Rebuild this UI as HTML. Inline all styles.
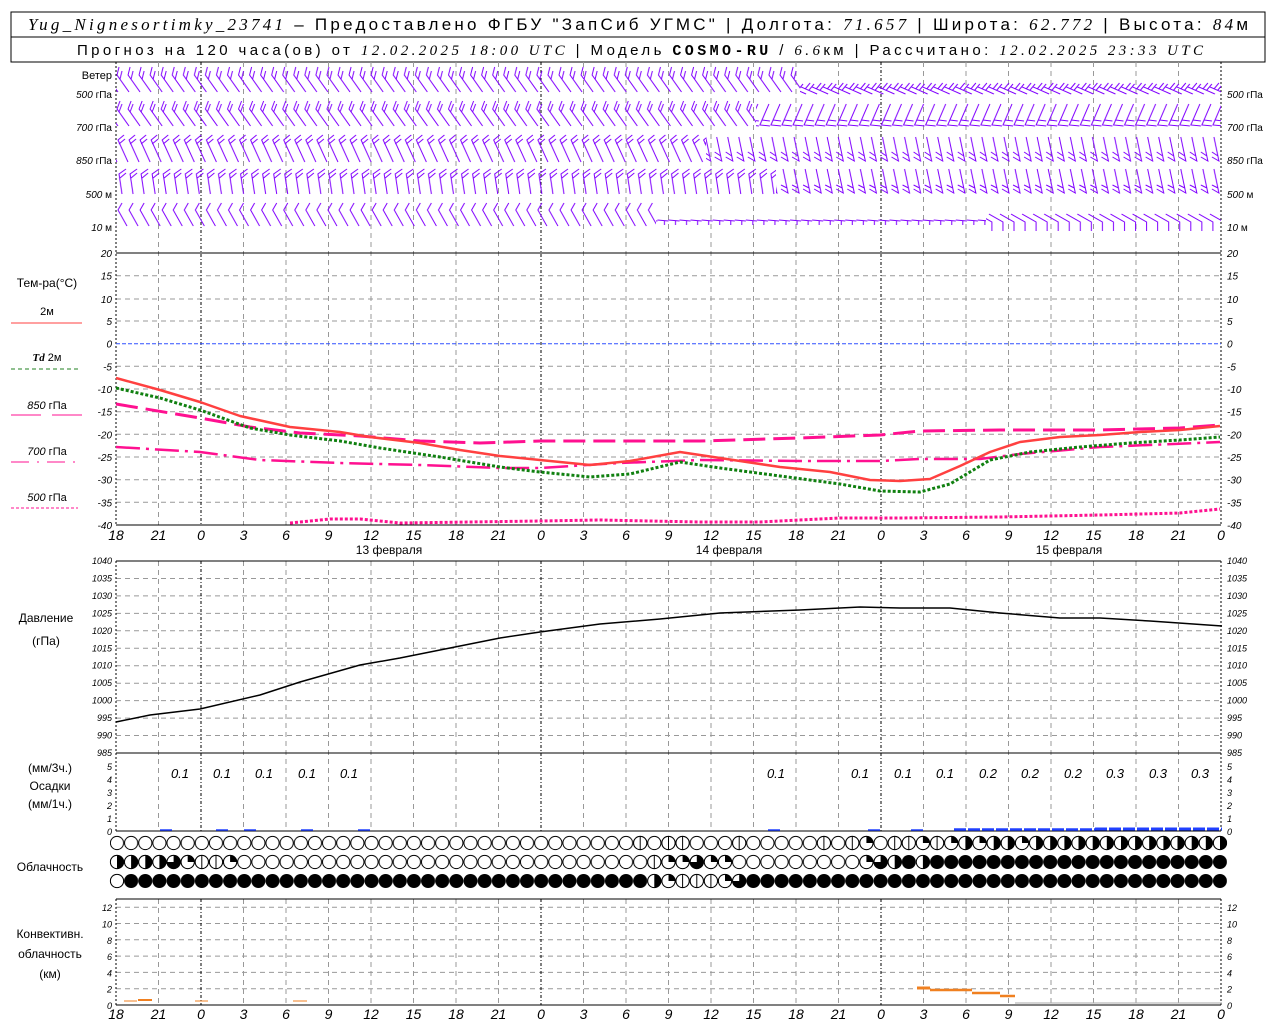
<!DOCTYPE html>
<html><head><meta charset="utf-8"><style>
html,body{margin:0;padding:0;background:#fff;width:1280px;height:1024px;overflow:hidden}
svg{display:block}
text{font-family:"Liberation Sans",sans-serif}
</style></head><body>
<svg width="1280" height="1024" xmlns="http://www.w3.org/2000/svg" xmlns:xlink="http://www.w3.org/1999/xlink">
<defs>
<pattern id="w1a" patternUnits="userSpaceOnUse" x="116" y="66" width="11.05" height="30"><g stroke="#8000ff" stroke-width="1" fill="none"><g id="b1"><path d="M13,26 L1,9 L3,1 M4,13 L6,5"/></g><use xlink:href="#b1" x="-11.05"/><use xlink:href="#b1" x="11.05"/></g></pattern>
<pattern id="w1b" patternUnits="userSpaceOnUse" x="116" y="66" width="11.05" height="30"><g stroke="#8000ff" stroke-width="1" fill="none"><g id="b2"><path d="M0,21 L16,28 M4,23 L9,17 M8,24 L13,18"/></g><use xlink:href="#b2" x="-11.05"/><use xlink:href="#b2" x="11.05"/></g></pattern>
<pattern id="w2a" patternUnits="userSpaceOnUse" x="116" y="99" width="11.05" height="30"><g stroke="#8000ff" stroke-width="1" fill="none"><g id="b3"><path d="M13,27 L1,10 L4,2 M3,13 L6,5"/></g><use xlink:href="#b3" x="-11.05"/><use xlink:href="#b3" x="11.05"/></g></pattern>
<pattern id="w2b" patternUnits="userSpaceOnUse" x="116" y="99" width="11.05" height="30"><g stroke="#8000ff" stroke-width="1" fill="none"><g id="b4"><path d="M12,5 L3,26 L13,27 M5,21 L13,22"/></g><use xlink:href="#b4" x="-11.05"/><use xlink:href="#b4" x="11.05"/></g></pattern>
<pattern id="w3a" patternUnits="userSpaceOnUse" x="116" y="134" width="11.05" height="32"><g stroke="#8000ff" stroke-width="1" fill="none"><g id="b5"><path d="M12,28 L2,6 L8,1 M3,10 L9,5"/></g><use xlink:href="#b5" x="-11.05"/><use xlink:href="#b5" x="11.05"/></g></pattern>
<pattern id="w3b" patternUnits="userSpaceOnUse" x="116" y="134" width="11.05" height="32"><g stroke="#8000ff" stroke-width="1" fill="none"><g id="b6"><path d="M4,3 L9,27 L2,23 M8,22 L2,18"/></g><use xlink:href="#b6" x="-11.05"/><use xlink:href="#b6" x="11.05"/></g></pattern>
<pattern id="w4a" patternUnits="userSpaceOnUse" x="116" y="166" width="11.05" height="32"><g stroke="#8000ff" stroke-width="1" fill="none"><g id="b7"><path d="M6,28 L3,8 L10,3 M4,12 L10,7"/></g><use xlink:href="#b7" x="-11.05"/><use xlink:href="#b7" x="11.05"/></g></pattern>
<pattern id="w4b" patternUnits="userSpaceOnUse" x="116" y="166" width="11.05" height="32"><g stroke="#8000ff" stroke-width="1" fill="none"><g id="b8"><path d="M4,3 L9,27 L2,23 M8,22 L2,19"/></g><use xlink:href="#b8" x="-11.05"/><use xlink:href="#b8" x="11.05"/></g></pattern>
<pattern id="w5a" patternUnits="userSpaceOnUse" x="116" y="200" width="11.05" height="32"><g stroke="#8000ff" stroke-width="1" fill="none"><g id="b9"><path d="M11,26 L2,10 L6,3"/></g><use xlink:href="#b9" x="-11.05"/><use xlink:href="#b9" x="11.05"/></g></pattern>
<pattern id="w5b" patternUnits="userSpaceOnUse" x="116" y="200" width="11.05" height="32"><g stroke="#8000ff" stroke-width="1" fill="none"><g id="b10"><path d="M0,20 L11.05,21 M7,21 L7,25"/></g></g></pattern>
<pattern id="w5c" patternUnits="userSpaceOnUse" x="116" y="200" width="11.05" height="32"><g stroke="#8000ff" stroke-width="1" fill="none"><g id="b11"><path d="M0,14 L14,22 L14,31"/></g><use xlink:href="#b11" x="-11.05"/><use xlink:href="#b11" x="11.05"/></g></pattern>
<pattern id="cO" patternUnits="userSpaceOnUse" x="110" y="833" width="14.14" height="19"><circle cx="7" cy="10" r="6.6" fill="#fff" stroke="#000"/></pattern>
<pattern id="cF" patternUnits="userSpaceOnUse" x="110" y="833" width="14.14" height="19"><circle cx="7" cy="10" r="7" fill="#000"/></pattern>
<g id="co"><circle r="6.6" fill="#fff" stroke="#000"/></g>
<g id="ch"><circle r="6.6" fill="#fff" stroke="#000"/><path d="M0,-6.8 A6.8,6.8 0 0 1 0,6.8Z" fill="#000"/></g>
<g id="cq"><circle r="6.6" fill="#fff" stroke="#000"/><path d="M0,0 L0,-6.8 A6.8,6.8 0 0 1 6.8,0Z" fill="#000"/></g>
<g id="ct"><circle r="6.6" fill="#fff" stroke="#000"/><path d="M0,0 L0,-6.8 A6.8,6.8 0 1 1 -6.8,0Z" fill="#000"/></g>
<g id="cv"><circle r="6.6" fill="#fff" stroke="#000"/><path d="M0,-6.8V6.8" stroke="#000"/></g>
</defs>

<rect x="11" y="12" width="1254" height="50" fill="#fff" stroke="#000" stroke-width="1"/>
<line x1="11" y1="37" x2="1265" y2="37" stroke="#000"/>
<text x="638" y="30" font-size="17" text-anchor="middle" fill="#000" textLength="1220"><tspan font-family="Liberation Serif" font-style="italic">Yug_Nignesortimky_23741</tspan> – Предоставлено ФГБУ "ЗапСиб УГМС" | Долгота: <tspan font-family="Liberation Serif" font-style="italic">71.657</tspan> | Широта: <tspan font-family="Liberation Serif" font-style="italic">62.772</tspan> | Высота: <tspan font-family="Liberation Serif" font-style="italic">84</tspan>м</text>
<text x="640" y="55" font-size="15" text-anchor="middle" fill="#000" textLength="1126">Прогноз на 120 часа(ов) от <tspan font-family="Liberation Serif" font-style="italic">12.02.2025 18:00 UTC</tspan>  | Модель <tspan font-family="Liberation Mono" font-weight="bold">COSMO-RU</tspan> / <tspan font-family="Liberation Serif" font-style="italic">6.6</tspan>км | Рассчитано: <tspan font-family="Liberation Serif" font-style="italic">12.02.2025 23:33 UTC</tspan></text>

<!-- vertical grid -->
<g stroke="#999" stroke-dasharray="5,4" fill="none">
<path d="M158.5,62V525M243.5,62V525M286,62V525M328.5,62V525M371,62V525M413.5,62V525M456,62V525M498.5,62V525M583.5,62V525M626,62V525M668.5,62V525M711,62V525M753.5,62V525M796,62V525M838.5,62V525M923.5,62V525M966,62V525M1008.5,62V525M1051,62V525M1093.5,62V525M1136,62V525M1178.5,62V525"/>
<path d="M158.5,561V831M243.5,561V831M286,561V831M328.5,561V831M371,561V831M413.5,561V831M456,561V831M498.5,561V831M583.5,561V831M626,561V831M668.5,561V831M711,561V831M753.5,561V831M796,561V831M838.5,561V831M923.5,561V831M966,561V831M1008.5,561V831M1051,561V831M1093.5,561V831M1136,561V831M1178.5,561V831"/>
<path d="M158.5,899V1005M243.5,899V1005M286,899V1005M328.5,899V1005M371,899V1005M413.5,899V1005M456,899V1005M498.5,899V1005M583.5,899V1005M626,899V1005M668.5,899V1005M711,899V1005M753.5,899V1005M796,899V1005M838.5,899V1005M923.5,899V1005M966,899V1005M1008.5,899V1005M1051,899V1005M1093.5,899V1005M1136,899V1005M1178.5,899V1005"/>
<!-- horizontal -->
<path d="M116,275.7H1221M116,299H1221M116,321H1221M116,366.3H1221M116,389H1221M116,411.7H1221M116,434.3H1221M116,457H1221M116,479.7H1221M116,502.3H1221"/>
<path d="M116,578.5H1221M116,595.9H1221M116,613.4H1221M116,630.8H1221M116,648.3H1221M116,665.7H1221M116,683.2H1221M116,700.6H1221M116,718.1H1221M116,735.5H1221"/>
<path d="M116,988.7H1221M116,972.4H1221M116,956.1H1221M116,939.8H1221M116,923.5H1221M116,907.2H1221"/>
</g>
<g stroke="#000" stroke-dasharray="3,2,1,2" fill="none">
<path d="M201,62V525M541,62V525M881,62V525M201,561V831M541,561V831M881,561V831M201,899V1005M541,899V1005M881,899V1005"/>
</g>
<g stroke="#000" stroke-dasharray="2,2" fill="none">
<path d="M116,62V525M1221,62V525M116,561V831M1221,561V831M116,899V1005M1221,899V1005"/>
</g>
<g stroke="#000" fill="none">
<path d="M116,253H1221M116,525H1221M116,561H1221M116,753H1221M116,831H1221M116,899H1221M116,1005H1221"/>
</g>

<!-- wind -->
<rect x="116" y="66" width="684" height="30" fill="url(#w1a)"/>
<rect x="800" y="66" width="421" height="30" fill="url(#w1b)"/>
<rect x="116" y="99" width="640" height="30" fill="url(#w2a)"/>
<rect x="756" y="99" width="465" height="30" fill="url(#w2b)"/>
<rect x="116" y="134" width="590" height="32" fill="url(#w3a)"/>
<rect x="706" y="134" width="515" height="32" fill="url(#w3b)"/>
<rect x="116" y="166" width="660" height="32" fill="url(#w4a)"/>
<rect x="776" y="166" width="445" height="32" fill="url(#w4b)"/>
<rect x="116" y="200" width="540" height="32" fill="url(#w5a)"/>
<rect x="656" y="200" width="330" height="32" fill="url(#w5b)"/>
<rect x="986" y="200" width="235" height="32" fill="url(#w5c)"/>
<g font-size="10" fill="#000">
<text x="112" y="79" font-size="11" text-anchor="end">Ветер</text>
<g text-anchor="end"><text x="112" y="98"><tspan font-style="italic">500</tspan> гПа</text><text x="112" y="131"><tspan font-style="italic">700</tspan> гПа</text><text x="112" y="164"><tspan font-style="italic">850</tspan> гПа</text><text x="112" y="198"><tspan font-style="italic">500</tspan> м</text><text x="112" y="231"><tspan font-style="italic">10</tspan>  м</text></g>
<text x="1227" y="98"><tspan font-style="italic">500</tspan> гПа</text><text x="1227" y="131"><tspan font-style="italic">700</tspan> гПа</text><text x="1227" y="164"><tspan font-style="italic">850</tspan> гПа</text><text x="1227" y="198"><tspan font-style="italic">500</tspan> м</text><text x="1227" y="231"><tspan font-style="italic">10</tspan>  м</text>
</g>

<!-- temperature -->
<line x1="116" y1="343.7" x2="1221" y2="343.7" stroke="#3050ff" stroke-dasharray="4,2"/>
<g font-size="10" font-style="italic" fill="#000">
<g text-anchor="end"><text x="112" y="257">20</text><text x="112" y="279.7">15</text><text x="112" y="303">10</text><text x="112" y="325">5</text><text x="112" y="347.7">0</text><text x="112" y="370.3">-5</text><text x="112" y="393">-10</text><text x="112" y="415.7">-15</text><text x="112" y="438.3">-20</text><text x="112" y="461">-25</text><text x="112" y="483.7">-30</text><text x="112" y="506.3">-35</text><text x="112" y="529">-40</text></g>
<text x="1227" y="257">20</text><text x="1227" y="279.7">15</text><text x="1227" y="303">10</text><text x="1227" y="325">5</text><text x="1227" y="347.7">0</text><text x="1227" y="370.3">-5</text><text x="1227" y="393">-10</text><text x="1227" y="415.7">-15</text><text x="1227" y="438.3">-20</text><text x="1227" y="461">-25</text><text x="1227" y="483.7">-30</text><text x="1227" y="506.3">-35</text><text x="1227" y="529">-40</text>
</g>
<g font-size="11" fill="#000" text-anchor="middle">
<text x="47" y="287" font-size="12">Тем-ра(°С)</text>
<text x="47" y="315">2м</text>
<text x="47" y="361"><tspan font-family="Liberation Serif" font-style="italic" font-weight="bold">Td</tspan>  2м</text>
<text x="47" y="409"><tspan font-style="italic">850</tspan> гПа</text>
<text x="47" y="455"><tspan font-style="italic">700</tspan> гПа</text>
<text x="47" y="501"><tspan font-style="italic">500</tspan> гПа</text>
</g>
<line x1="11" y1="323" x2="82" y2="323" stroke="#ff4040"/>
<line x1="11" y1="369" x2="78" y2="369" stroke="#208020" stroke-dasharray="4,3"/>
<path d="M11,415H41M52,415H82" stroke="#ff1090"/>
<line x1="11" y1="462" x2="82" y2="462" stroke="#ff1090" stroke-dasharray="18,8,2,8"/>
<line x1="11" y1="508" x2="78" y2="508" stroke="#ff1090" stroke-dasharray="3,2"/>
<g fill="none" stroke-linejoin="round">
<polyline points="116,404 200,418 250,427 300,433 360,436 420,441 480,443 540,441 600,441 700,441 800,438 880,435 920,431 1000,430 1100,430 1180,428 1220,425" stroke="#ff1090" stroke-width="3" stroke-dasharray="22,8"/>
<polyline points="116,447 200,452 260,460 340,463 420,465 500,468 540,468 620,463 700,460 800,461 880,461 920,459 980,459 1020,454 1100,447 1220,442" stroke="#ff1090" stroke-width="2.5" stroke-dasharray="24,6,3,6"/>
<polyline points="290,523 330,519 360,519 400,523 470,522 540,521 600,520 700,522 760,522 840,518 900,518 1000,517 1100,515 1180,513 1220,509" stroke="#ff1090" stroke-width="3" stroke-dasharray="3,2"/>
<polyline points="116,388 160,398 200,410 250,428 290,435 340,441 380,448 440,457 500,467 540,472 590,477 630,474 680,462 720,468 780,476 840,484 880,491 920,492 950,484 990,460 1030,452 1080,447 1130,443 1180,440 1220,437" stroke="#108010" stroke-width="3" stroke-dasharray="3,2"/>
<polyline points="116,378 160,390 200,402 240,416 290,427 340,432 370,437 420,443 460,450 500,456 540,460 590,465 630,461 680,452 720,458 780,467 830,472 870,480 900,481 930,479 960,466 990,452 1020,442 1060,437 1100,435 1140,432 1180,430 1220,426" stroke="#ff4040" stroke-width="2.5"/>
</g>
<!-- time labels -->
<g font-size="14" font-style="italic" text-anchor="middle" fill="#000" id="tl">
<text x="116" y="540">18</text><text x="158.5" y="540">21</text><text x="201" y="540">0</text><text x="243.5" y="540">3</text><text x="286" y="540">6</text><text x="328.5" y="540">9</text><text x="371" y="540">12</text><text x="413.5" y="540">15</text><text x="456" y="540">18</text><text x="498.5" y="540">21</text><text x="541" y="540">0</text><text x="583.5" y="540">3</text><text x="626" y="540">6</text><text x="668.5" y="540">9</text><text x="711" y="540">12</text><text x="753.5" y="540">15</text><text x="796" y="540">18</text><text x="838.5" y="540">21</text><text x="881" y="540">0</text><text x="923.5" y="540">3</text><text x="966" y="540">6</text><text x="1008.5" y="540">9</text><text x="1051" y="540">12</text><text x="1093.5" y="540">15</text><text x="1136" y="540">18</text><text x="1178.5" y="540">21</text><text x="1221" y="540">0</text>
</g>
<use xlink:href="#tl" y="479"/>
<g font-size="12" text-anchor="middle" fill="#000">
<text x="389" y="554">13 февраля</text><text x="729" y="554">14 февраля</text><text x="1069" y="554">15 февраля</text>
</g>

<!-- pressure -->
<g font-size="9" font-style="italic" fill="#000">
<g text-anchor="end"><text x="112" y="564">1040</text><text x="112" y="581.5">1035</text><text x="112" y="598.9">1030</text><text x="112" y="616.4">1025</text><text x="112" y="633.8">1020</text><text x="112" y="651.3">1015</text><text x="112" y="668.7">1010</text><text x="112" y="686.2">1005</text><text x="112" y="703.6">1000</text><text x="112" y="721.1">995</text><text x="112" y="738.5">990</text><text x="112" y="756">985</text></g>
<text x="1227" y="564">1040</text><text x="1227" y="581.5">1035</text><text x="1227" y="598.9">1030</text><text x="1227" y="616.4">1025</text><text x="1227" y="633.8">1020</text><text x="1227" y="651.3">1015</text><text x="1227" y="668.7">1010</text><text x="1227" y="686.2">1005</text><text x="1227" y="703.6">1000</text><text x="1227" y="721.1">995</text><text x="1227" y="738.5">990</text><text x="1227" y="756">985</text>
</g>
<g font-size="12" text-anchor="middle" fill="#000"><text x="46" y="622">Давление</text><text x="46" y="645">(гПа)</text></g>
<polyline fill="none" stroke="#000" stroke-width="1.5" points="116,722 150,715 200,709 260,695 300,682 360,665 400,658 460,646 500,638 540,632 600,624 660,619 720,613 800,610 860,607 900,608 950,608 1000,613 1060,618 1100,618 1150,621 1222,626"/>

<!-- precip -->
<g font-size="9" font-style="italic" fill="#000">
<g text-anchor="end"><text x="112" y="835">0</text><text x="112" y="822">1</text><text x="112" y="809">2</text><text x="112" y="796">3</text><text x="112" y="783">4</text><text x="112" y="770">5</text></g>
<text x="1227" y="835">0</text><text x="1227" y="822">1</text><text x="1227" y="809">2</text><text x="1227" y="796">3</text><text x="1227" y="783">4</text><text x="1227" y="770">5</text>
</g>
<g font-size="12" text-anchor="middle" fill="#000"><text x="50" y="772">(мм/3ч.)</text><text x="50" y="790">Осадки</text><text x="50" y="808">(мм/1ч.)</text></g>
<g font-size="13" font-style="italic" text-anchor="middle" fill="#000">
<text x="180" y="778">0.1</text><text x="222" y="778">0.1</text><text x="264" y="778">0.1</text><text x="307" y="778">0.1</text><text x="349" y="778">0.1</text><text x="776" y="778">0.1</text><text x="860" y="778">0.1</text><text x="903" y="778">0.1</text><text x="945" y="778">0.1</text><text x="988" y="778">0.2</text><text x="1030" y="778">0.2</text><text x="1073" y="778">0.2</text><text x="1115" y="778">0.3</text><text x="1158" y="778">0.3</text><text x="1200" y="778">0.3</text>
</g>
<path d="M160,830h12M216,830h12M244,830h12M301,830h12M358,830h12M768,830h12M868,830h12M911,830h12" stroke="#2040ff" stroke-width="1.5"/>
<line x1="954" y1="829.5" x2="1095" y2="829.5" stroke="#2040ff" stroke-width="2.5" stroke-dasharray="12,2"/>
<line x1="1095" y1="829" x2="1222" y2="829" stroke="#2040ff" stroke-width="3" stroke-dasharray="12,2"/>

<!-- clouds -->
<rect x="110" y="833" width="1117" height="19" fill="url(#cO)"/>
<rect x="110" y="852" width="792" height="19" fill="url(#cO)"/>
<rect x="902" y="852" width="325" height="19" fill="url(#cF)"/>
<rect x="110" y="871" width="1117" height="19" fill="url(#cF)"/>
<!-- row1 overlays -->
<use xlink:href="#cv" x="640.2" y="843"/><use xlink:href="#cv" x="668.5" y="843"/><use xlink:href="#cv" x="682.6" y="843"/><use xlink:href="#cv" x="739.2" y="843"/><use xlink:href="#cv" x="823.9" y="843"/><use xlink:href="#cv" x="852.3" y="843"/><use xlink:href="#cq" x="866.4" y="843"/><use xlink:href="#cv" x="894.7" y="843"/><use xlink:href="#cv" x="908.8" y="843"/><use xlink:href="#cq" x="922.9" y="843"/><use xlink:href="#cv" x="937.1" y="843"/><use xlink:href="#cq" x="951.2" y="843"/><use xlink:href="#ch" x="965.4" y="843"/><use xlink:href="#cq" x="979.5" y="843"/><use xlink:href="#ch" x="993.7" y="843"/><use xlink:href="#ch" x="1007.8" y="843"/><use xlink:href="#cq" x="1022" y="843"/><use xlink:href="#ch" x="1036.1" y="843"/><use xlink:href="#ch" x="1050.2" y="843"/><use xlink:href="#ch" x="1064.4" y="843"/><use xlink:href="#ch" x="1078.5" y="843"/><use xlink:href="#ch" x="1092.7" y="843"/><use xlink:href="#ch" x="1106.8" y="843"/><use xlink:href="#ch" x="1121" y="843"/><use xlink:href="#ch" x="1135.1" y="843"/><use xlink:href="#ch" x="1149.2" y="843"/><use xlink:href="#ch" x="1163.4" y="843"/><use xlink:href="#ch" x="1177.5" y="843"/><use xlink:href="#ch" x="1191.7" y="843"/><use xlink:href="#ch" x="1205.8" y="843"/><use xlink:href="#ch" x="1220" y="843"/>
<!-- row2 overlays -->
<use xlink:href="#ch" x="117" y="862"/><use xlink:href="#ch" x="131.1" y="862"/><use xlink:href="#ch" x="145.3" y="862"/><use xlink:href="#ch" x="159.4" y="862"/><use xlink:href="#ct" x="173.6" y="862"/><use xlink:href="#cq" x="187.7" y="862"/><use xlink:href="#cv" x="201.8" y="862"/><use xlink:href="#cv" x="216" y="862"/><use xlink:href="#cq" x="230.1" y="862"/>
<use xlink:href="#cv" x="654.3" y="862"/><use xlink:href="#cq" x="668.5" y="862"/><use xlink:href="#cq" x="682.6" y="862"/><use xlink:href="#ct" x="696.8" y="862"/><use xlink:href="#cq" x="710.9" y="862"/><use xlink:href="#cq" x="725" y="862"/>
<use xlink:href="#cq" x="866.4" y="862"/><use xlink:href="#ct" x="880.6" y="862"/><use xlink:href="#ch" x="894.7" y="862"/><use xlink:href="#ch" x="922.9" y="862"/>
<!-- row3 overlays -->
<use xlink:href="#co" x="117" y="881"/><use xlink:href="#ch" x="654.3" y="881"/><use xlink:href="#cq" x="668.5" y="881"/><use xlink:href="#cv" x="682.6" y="881"/><use xlink:href="#cv" x="696.8" y="881"/><use xlink:href="#cv" x="710.9" y="881"/><use xlink:href="#cq" x="725" y="881"/><use xlink:href="#ct" x="739.2" y="881"/>
<text x="50" y="871" font-size="12" text-anchor="middle" fill="#000">Облачность</text>

<!-- convective -->
<g font-size="9" font-style="italic" fill="#000">
<g text-anchor="end"><text x="112" y="1009">0</text><text x="112" y="992.7">2</text><text x="112" y="976.4">4</text><text x="112" y="960.1">6</text><text x="112" y="943.8">8</text><text x="112" y="927.5">10</text><text x="112" y="911.2">12</text></g>
<text x="1227" y="1009">0</text><text x="1227" y="992.7">2</text><text x="1227" y="976.4">4</text><text x="1227" y="960.1">6</text><text x="1227" y="943.8">8</text><text x="1227" y="927.5">10</text><text x="1227" y="911.2">12</text>
</g>
<g font-size="12" text-anchor="middle" fill="#000"><text x="50" y="938">Конвективн.</text><text x="50" y="958">облачность</text><text x="50" y="978">(км)</text></g>
<g stroke="#f08020">
<path d="M124,1001H137M195,1001H208M293,1001H307" stroke-width="1"/>
<path d="M138,1000H152" stroke-width="2"/>
<path d="M917,988H930" stroke-width="3"/>
<path d="M930,990H972M972,993H1000M1000,996H1015" stroke-width="2.5"/>
</g>
<line x1="1015" y1="1003" x2="1222" y2="1003" stroke="#aaa"/>
</svg>
</body></html>
